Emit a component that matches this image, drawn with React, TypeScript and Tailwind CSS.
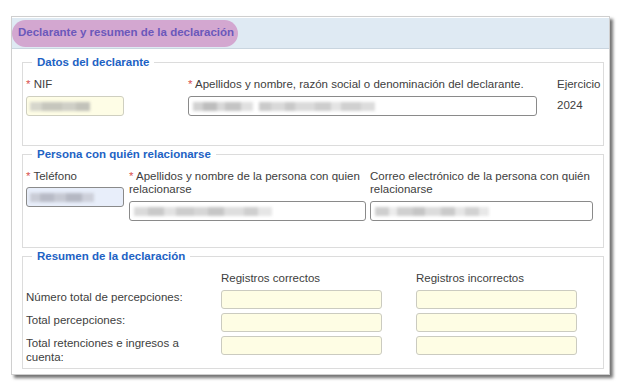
import React from 'react';

function Smudge({ blocks }: { blocks: [number, string][] }) {
  return (
    <div className="flex h-[10px] items-center blur-[1.4px]">
      {blocks.map(([w, c], i) => (
        <span key={i} className="inline-block h-[9px]" style={{ width: w, background: c }} />
      ))}
    </div>
  );
}

function Req() {
  return <span className="text-[#d9534f]">* </span>;
}

function Legend({ children }: { children: React.ReactNode }) {
  return (
    <legend className="ml-[6px] px-[5px] text-[11.5px] font-bold leading-[14px] text-[#1d62c4]">
      {children}
    </legend>
  );
}

const grayA: [number, string][] = [[10, '#d2d2d2'], [14, '#bdbdbd'], [8, '#d8d8d8'], [16, '#c4c4c4'], [12, '#e0e0e0']];

export default function App() {
  const rows = ['Número total de percepciones:', 'Total percepciones:', 'Total retenciones e ingresos a cuenta:'];
  return (
    <div className="min-h-screen bg-white pl-[11px] pt-[16px] text-[11.5px] text-[#404040] [font-family:'Liberation_Sans',Arial,sans-serif]">
      <div className="w-[599px] border border-[#cfcfcf] bg-white pb-[5px] shadow-[3px_3px_3px_rgba(0,0,0,0.55)]">
        {/* cabecera */}
        <div className="mt-[1px] flex h-[31px] items-center border-b border-[#c9d5df] bg-[#dfeaf3]">
          <div className="flex h-[27px] w-[226px] items-center whitespace-nowrap rounded-full bg-[#d3a7d0] pl-[6px] text-[11.5px] font-bold text-[#6b58bb]">
            Declarante y resumen de la declaración
          </div>
        </div>

        {/* Datos del declarante */}
        <fieldset className="ml-[10px] mr-[5px] mt-[6px] border border-[#dcdcdc] pb-[29px] pl-[3px] pt-[9px]">
          <Legend>Datos del declarante</Legend>
          <div className="flex items-start">
            <div className="flex w-[98px] flex-col gap-[5px]">
              <div className="leading-[13px]"><Req />NIF</div>
              <div className="flex h-[20px] items-center rounded-[3px] border border-[#cfcfc0] bg-[#fefde6] pl-[3px]">
                <Smudge blocks={[[12, '#d6d6cc'], [20, '#c6c6bd'], [14, '#cfcfc6'], [14, '#c2c2ba']]} />
              </div>
            </div>
            <div className="ml-[64px] flex w-[349px] flex-col gap-[5px]">
              <div className="whitespace-nowrap leading-[13px]"><Req />Apellidos y nombre, razón social o denominación del declarante.</div>
              <div className="flex h-[20px] items-center rounded-[3px] border border-[#8a8a8a] bg-white pl-[4px]">
                <Smudge blocks={[...grayA, [6, '#fff'], [12, '#cacaca'], [14, '#d9d9d9'], [10, '#c8c8c8'], [20, '#dadada'], [16, '#cdcdcd'], [10, '#e4e4e4'], [20, '#d0d0d0'], [14, '#dcdcdc']]} />
              </div>
            </div>
            <div className="ml-[20px] flex flex-col gap-[5px]">
              <div className="leading-[13px]">Ejercicio</div>
              <div className="pt-[2px] leading-[14px]">2024</div>
            </div>
          </div>
        </fieldset>

        {/* Persona con quién relacionarse */}
        <fieldset className="ml-[10px] mr-[5px] mt-[1px] border border-[#dcdcdc] pb-[26px] pl-[3px] pt-[9px]">
          <Legend>Persona con quién relacionarse</Legend>
          <div className="flex items-start">
            <div className="flex w-[98px] flex-col gap-[4px]">
              <div className="leading-[13px]"><Req />Teléfono</div>
              <div className="flex h-[20px] items-center rounded-[3px] border border-[#8a8a8a] bg-[#e8eefa] pl-[3px]">
                <Smudge blocks={[[10, '#c9ccd6'], [14, '#b8bbc6'], [12, '#c6c9d3'], [16, '#b5b8c3'], [12, '#cdd0da']]} />
              </div>
            </div>
            <div className="ml-[5px] flex w-[237px] flex-col gap-[5px]">
              <div className="whitespace-nowrap leading-[13px]"><Req />Apellidos y nombre de la persona con quien<br />relacionarse</div>
              <div className="flex h-[20px] items-center rounded-[3px] border border-[#8a8a8a] bg-white pl-[4px]">
                <Smudge blocks={[[14, '#dadada'], [16, '#c9c9c9'], [12, '#e2e2e2'], [18, '#cdcdcd'], [14, '#d6d6d6'], [16, '#c6c6c6'], [20, '#dedede'], [14, '#cfcfcf'], [14, '#e6e6e6']]} />
              </div>
            </div>
            <div className="ml-[4px] flex w-[223px] flex-col gap-[5px]">
              <div className="whitespace-nowrap leading-[13px]">Correo electrónico de la persona con quién<br />relacionarse</div>
              <div className="flex h-[20px] items-center rounded-[3px] border border-[#8a8a8a] bg-white pl-[4px]">
                <Smudge blocks={[[14, '#cfcfcf'], [8, '#ececec'], [16, '#d0d0d0'], [12, '#c5c5c5'], [16, '#dcdcdc'], [14, '#cacaca'], [10, '#e6e6e6'], [14, '#d2d2d2'], [10, '#e8e8e8']]} />
              </div>
            </div>
          </div>
        </fieldset>

        {/* Resumen de la declaración */}
        <fieldset className="ml-[10px] mr-[5px] mt-[1px] border border-[#dcdcdc] pb-[4px] pl-[3px] pt-[8px]">
          <Legend>Resumen de la declaración</Legend>
          <div className="grid grid-cols-[195px_195px_161px] gap-y-[4px]">
            <div />
            <div className="h-[15px] leading-[14px]">Registros correctos</div>
            <div className="h-[15px] leading-[14px]">Registros incorrectos</div>
            {rows.map((r) => (
              <React.Fragment key={r}>
                <div className="pr-[30px] leading-[14px]">{r}</div>
                <div className="h-[19px] w-[161px] rounded-[3px] border border-[#cbcbc0] bg-[#fefde4]" />
                <div className="h-[19px] w-[161px] rounded-[3px] border border-[#cbcbc0] bg-[#fefde4]" />
              </React.Fragment>
            ))}
          </div>
        </fieldset>
      </div>
    </div>
  );
}
